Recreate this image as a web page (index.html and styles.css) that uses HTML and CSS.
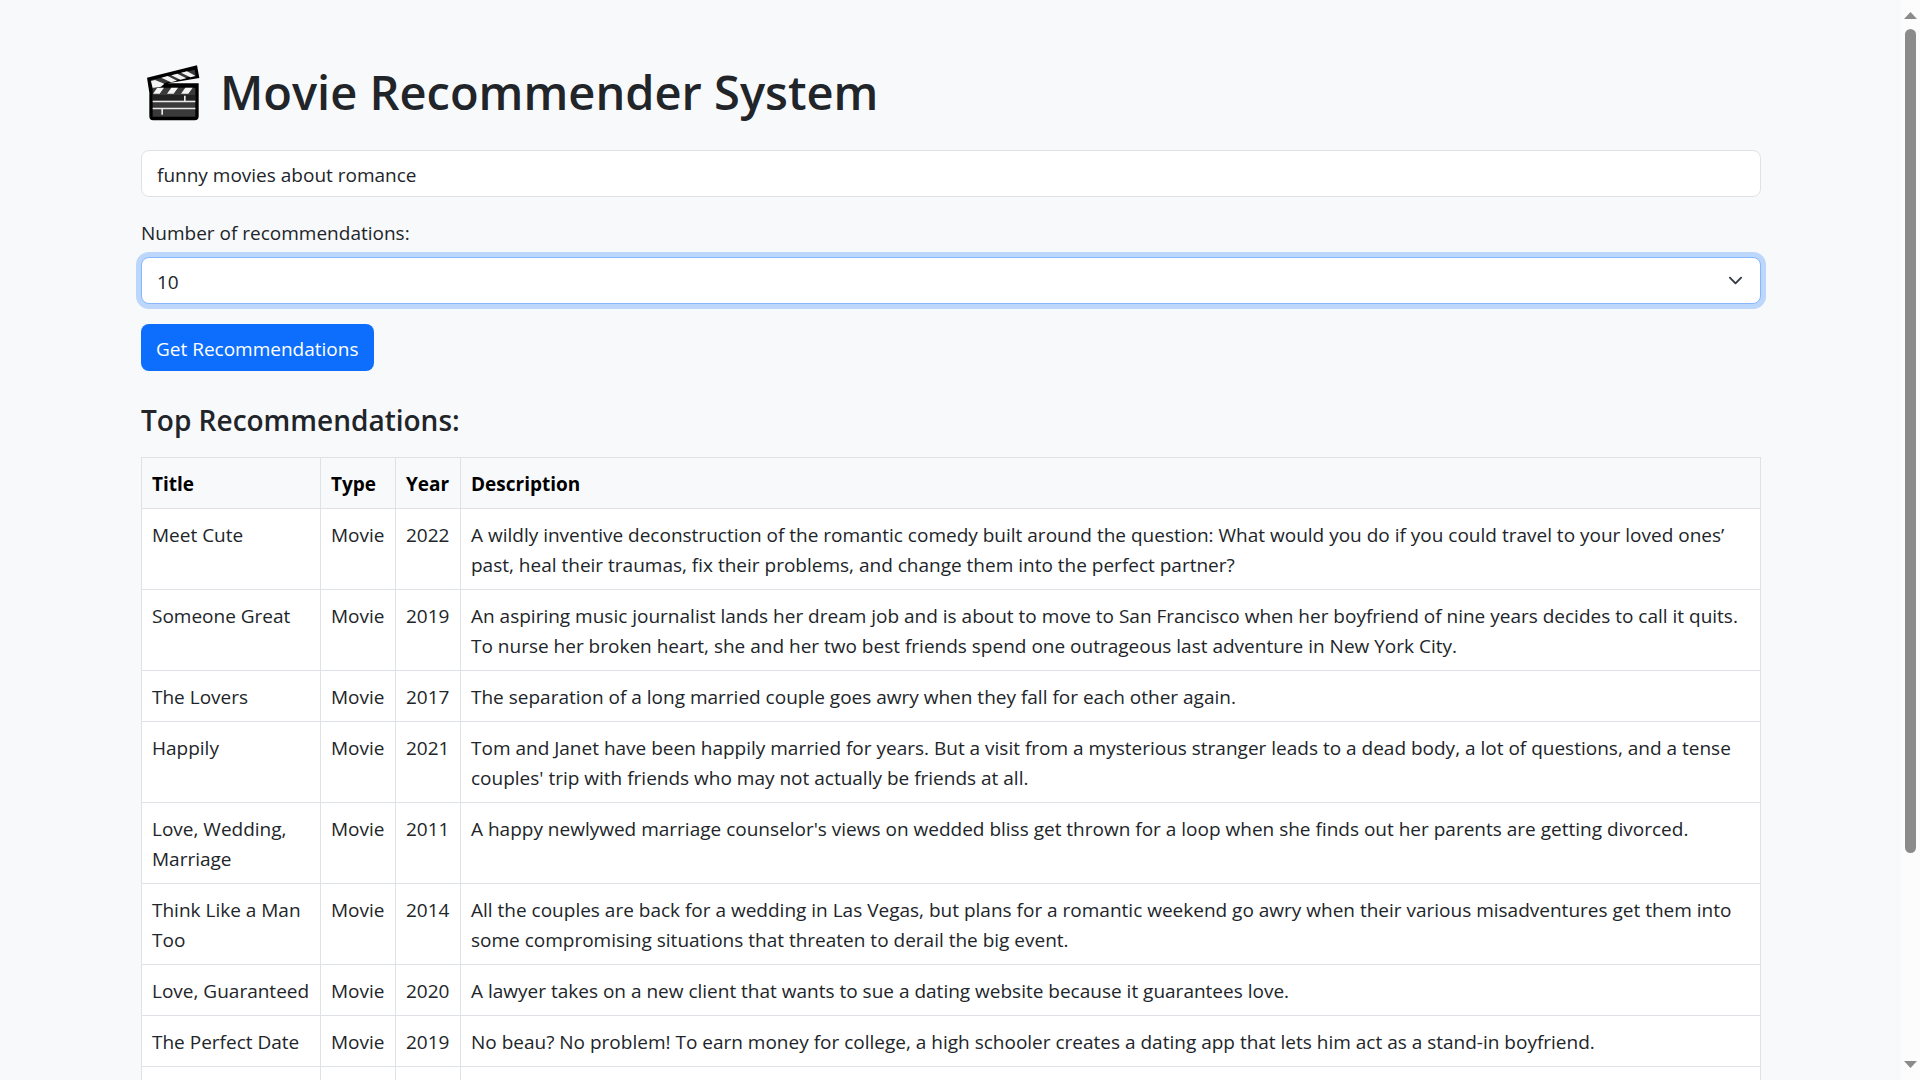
FILE: index.html
```html
<!DOCTYPE html>
<html lang="en">
<head>
<meta charset="utf-8">
<meta name="viewport" content="width=device-width, initial-scale=1">
<title>Movie Recommender System</title>
<link rel="stylesheet" href="styles.css">
</head>
<body>
<main class="container">
  <h1 class="page-title">
    <svg class="clapper" viewBox="0 0 198 180" aria-hidden="true">
      <path d="M18 47 168 10 175 48 80 64H173V163Q173 175 161 175H36Q25 175 25 163V92Z" fill="#000"/>
      <path d="M29 55 161 23 164 40 35 72Z" fill="#3a3a3a"/>
      <path d="M30 57 42 54 70 65 60 74 35 79ZM61 47 80 42 108 56 90 61ZM91 40 109 35 136 49 118 53ZM120 32 138 28 164 42 148 46Z" fill="#f4f4f4"/>
      <path d="M35 77H163V164H35Z" fill="#3a3a3a"/>
      <path d="M36 95 49 77H69L56 95ZM78 95 91 77H111L98 95ZM120 95 133 77H155L142 95Z" fill="#f4f4f4"/>
      <path d="M35 99H163V115H35Z" fill="#222"/>
      <path d="M35 116H163V121H35ZM35 137H163V142H35ZM129 101H134V117H129ZM61 142H66V158H61Z" fill="#e8e8e8"/>
    </svg>
    <span>Movie Recommender System</span>
  </h1>
  <form class="search-form">
    <input class="control" type="text" value="funny movies about romance" aria-label="Describe a movie">
    <div class="field">
      <label for="count">Number of recommendations:</label>
      <div class="select-wrap">
        <select class="control focused" id="count">
          <option>5</option>
          <option selected>10</option>
          <option>20</option>
        </select>
        <svg class="chevron" viewBox="0 0 16 16" aria-hidden="true"><path d="m2 5 6 6 6-6" fill="none" stroke="#343a40" stroke-width="2" stroke-linecap="round" stroke-linejoin="round"/></svg>
      </div>
    </div>
    <button class="submit" type="button">Get Recommendations</button>
  </form>
  <h2 class="section-title">Top Recommendations:</h2>
  <table class="results">
    <colgroup><col class="col-title"><col class="col-type"><col class="col-year"><col></colgroup>
    <thead>
      <tr><th>Title</th><th>Type</th><th>Year</th><th>Description</th></tr>
    </thead>
    <tbody>
      <tr><td>Meet Cute</td><td>Movie</td><td>2022</td><td>A wildly inventive deconstruction of the romantic comedy built around the question: What would you do if you could travel to your loved ones’ past, heal their traumas, fix their problems, and change them into the perfect partner?</td></tr>
      <tr><td>Someone Great</td><td>Movie</td><td>2019</td><td>An aspiring music journalist lands her dream job and is about to move to San Francisco when her boyfriend of nine years decides to call it quits. To nurse her broken heart, she and her two best friends spend one outrageous last adventure in New York City.</td></tr>
      <tr><td>The Lovers</td><td>Movie</td><td>2017</td><td>The separation of a long married couple goes awry when they fall for each other again.</td></tr>
      <tr><td>Happily</td><td>Movie</td><td>2021</td><td>Tom and Janet have been happily married for years. But a visit from a mysterious stranger leads to a dead body, a lot of questions, and a tense couples' trip with friends who may not actually be friends at all.</td></tr>
      <tr><td>Love, Wedding, Marriage</td><td>Movie</td><td>2011</td><td>A happy newlywed marriage counselor's views on wedded bliss get thrown for a loop when she finds out her parents are getting divorced.</td></tr>
      <tr><td>Think Like a Man Too</td><td>Movie</td><td>2014</td><td>All the couples are back for a wedding in Las Vegas, but plans for a romantic weekend go awry when their various misadventures get them into some compromising situations that threaten to derail the big event.</td></tr>
      <tr><td>Love, Guaranteed</td><td>Movie</td><td>2020</td><td>A lawyer takes on a new client that wants to sue a dating website because it guarantees love.</td></tr>
      <tr><td>The Perfect Date</td><td>Movie</td><td>2019</td><td>No beau? No problem! To earn money for college, a high schooler creates a dating app that lets him act as a stand-in boyfriend.</td></tr>
      <tr class="pending"><td></td><td></td><td></td><td></td></tr>
    </tbody>
  </table>
</main>
<div class="scrollbar" aria-hidden="true">
  <svg class="arrow" viewBox="0 0 13 7"><path d="M0 7 6.500 0 13 7Z" fill="#8b8b8b"/></svg>
  <div class="track"><div class="thumb"></div></div>
  <svg class="arrow" viewBox="0 0 13 7"><path d="M0 0H13L6.500 7Z" fill="#8b8b8b"/></svg>
</div>
</body>
</html>
```

FILE: styles.css
```css
*, *::before, *::after { box-sizing: border-box; }

html { scrollbar-width: none; }

body {
  margin: 0;
  padding-right: 19px;
  background: #f8f9fb;
  color: #212529;
  font-family: "Open Sans", "Noto Sans", sans-serif;
  font-size: 19px;
  line-height: 30px;
}

.container {
  max-width: 1651px;
  margin: 0 auto;
  padding: 62px 15px 60px 16px;
}

.page-title {
  display: flex;
  align-items: center;
  gap: 13px;
  margin: 0 0 28px;
  font-size: 47px;
  font-weight: 600;
  line-height: 60px;
}

.clapper { flex: none; width: 66px; height: 60px; }

.search-form {
  display: flex;
  flex-direction: column;
  align-items: flex-start;
  gap: 20px;
}

.field { width: 100%; }
.field label { display: block; padding-top: 1px; margin-bottom: 9px; }

.control {
  display: block;
  width: 100%;
  height: 47px;
  padding: 2px 15px 0;
  border: 1px solid #dee2e6;
  border-radius: 8px;
  background: #fff;
  color: #212529;
  font: inherit;
  appearance: none;
}

.control.focused {
  border-color: #86b7fe;
  box-shadow: 0 0 0 5px rgba(13, 110, 253, 0.25);
  outline: 0;
}

.select-wrap { position: relative; }

.chevron {
  position: absolute;
  top: 16px;
  right: 18px;
  width: 15px;
  height: 15px;
  pointer-events: none;
}

.submit {
  height: 47px;
  padding: 2px 15px 0;
  border: 0;
  border-radius: 8px;
  background: #0d6efd;
  color: #fff;
  font: inherit;
}

.section-title {
  margin: 31px 0 19px;
  font-size: 28px;
  font-weight: 600;
  line-height: 36px;
}

.results {
  width: 100%;
  table-layout: fixed;
  border-collapse: collapse;
  background: #fff;
}

.col-title { width: 179px; }
.col-type { width: 75px; }
.col-year { width: 65px; }

.results th,
.results td {
  padding: 11px 10px 9px;
  border: 1px solid #dee2e6;
  text-align: left;
  vertical-align: top;
}

.results th { background: #f8f9fb; color: #000; font-weight: 700; }
.pending { height: 51px; }

.scrollbar {
  position: fixed;
  top: 0;
  right: 0;
  bottom: 0;
  display: flex;
  flex-direction: column;
  align-items: center;
  gap: 10px;
  width: 19px;
  padding: 12px 0;
  background: #fcfcfc;
}

.arrow { flex: none; width: 13px; height: 7px; }
.track { flex: 1; }
.thumb { width: 11px; height: 80.6%; border-radius: 6px; background: #8b8b8b; }
```
